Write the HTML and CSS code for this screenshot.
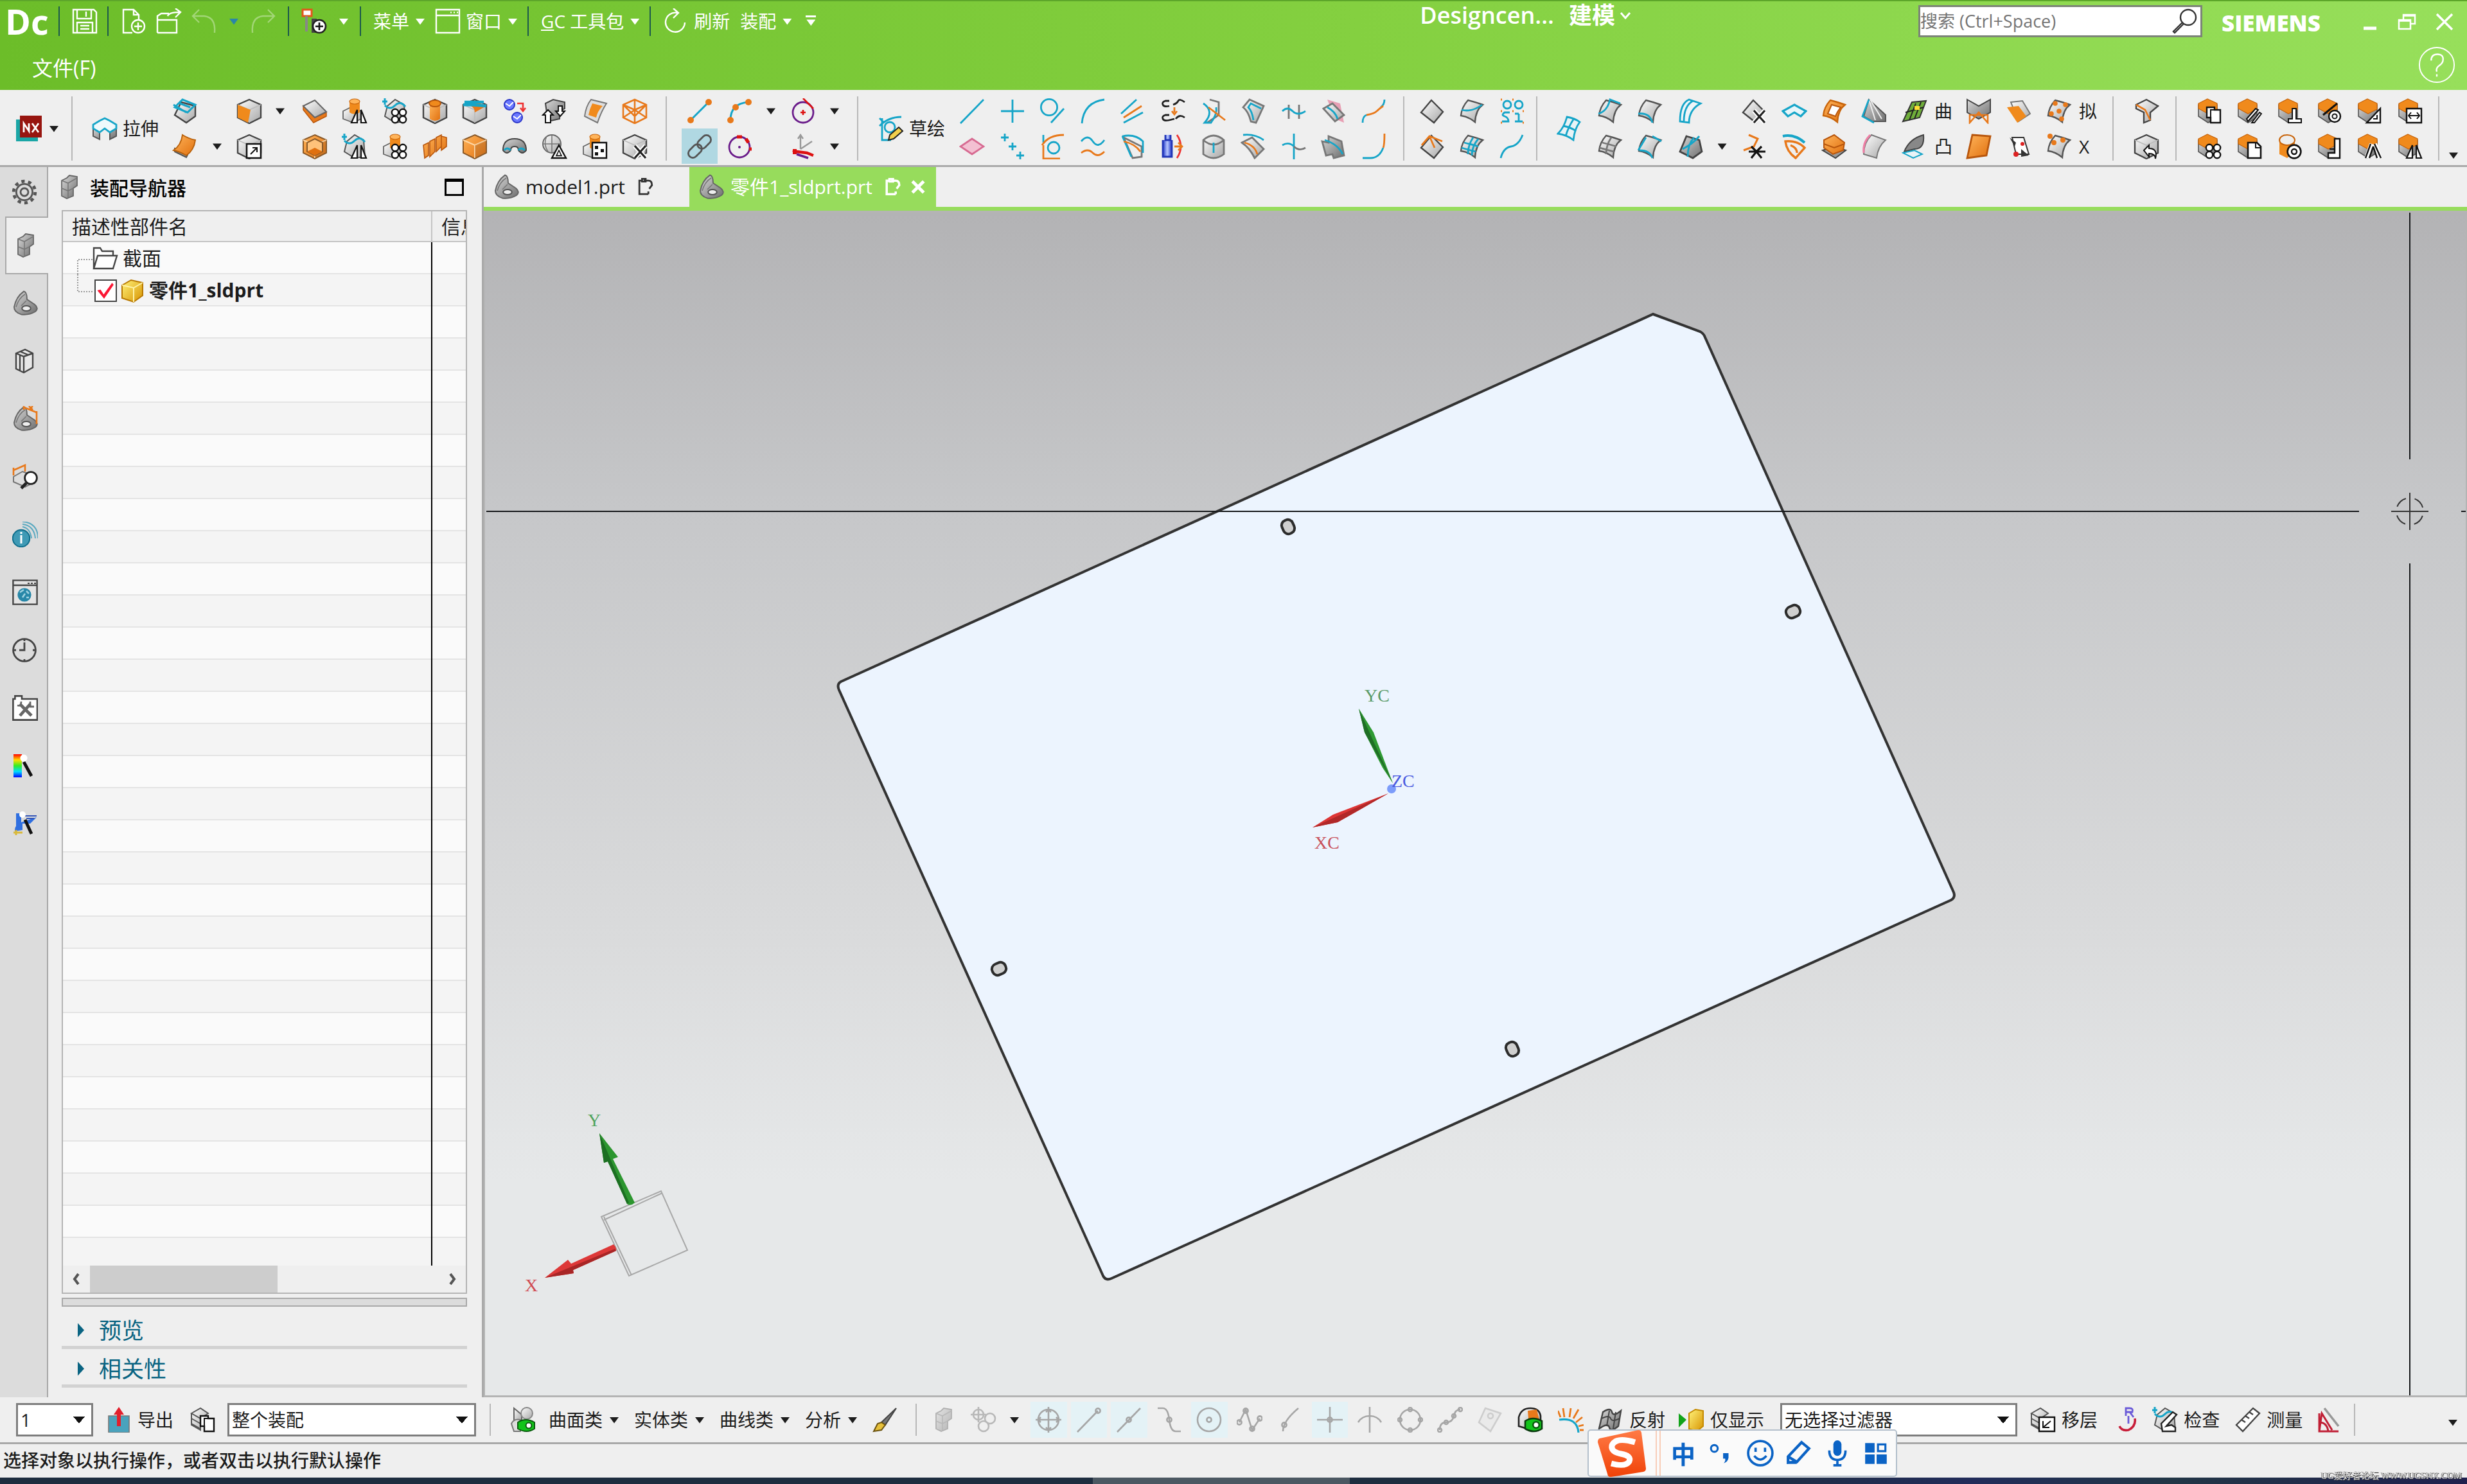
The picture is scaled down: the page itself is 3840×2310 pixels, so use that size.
FILE: index.html
```html
<!DOCTYPE html>
<html lang="zh-CN">
<head>
<meta charset="utf-8">
<title>Designcenter - 建模</title>
<link rel="stylesheet" href="styles.css">
</head>
<body>
<svg class="defs" width="0" height="0" aria-hidden="true">
<defs>
<linearGradient id="gG" x1="0" y1="0" x2="1" y2="1"><stop offset="0" stop-color="#fff"/><stop offset="1" stop-color="#a6a6a6"/></linearGradient>
<linearGradient id="gD" x1="0" y1="0" x2="1" y2="1"><stop offset="0" stop-color="#d8d8d8"/><stop offset="1" stop-color="#6e6e6e"/></linearGradient>
<linearGradient id="gO" x1="0" y1="0" x2="1" y2="1"><stop offset="0" stop-color="#ffb45a"/><stop offset="1" stop-color="#e0700f"/></linearGradient>
<linearGradient id="gY" x1="0" y1="0" x2="1" y2="1"><stop offset="0" stop-color="#fff27a"/><stop offset="1" stop-color="#d79300"/></linearGradient>
<linearGradient id="gB" x1="0" y1="0" x2="1" y2="0"><stop offset="0" stop-color="#1f35c8"/><stop offset=".5" stop-color="#b9c8ff"/><stop offset="1" stop-color="#1f35c8"/></linearGradient>
<linearGradient id="gR" x1="0" y1="0" x2="0" y2="1"><stop offset="0" stop-color="#f00"/><stop offset=".25" stop-color="#fd0"/><stop offset=".5" stop-color="#3e2"/><stop offset=".75" stop-color="#0df"/><stop offset="1" stop-color="#00f"/></linearGradient>
<linearGradient id="gS" x1="0" y1="0" x2="0" y2="1"><stop offset="0" stop-color="#ff7a45"/><stop offset="1" stop-color="#f04208"/></linearGradient>
</defs>
<!-- base bodies -->
<symbol id="cube" viewBox="0 0 20 20"><path d="M10 1l9 4v10l-9 4.500-9-4.500V5z" fill="url(#gG)" stroke="#444" stroke-width="1.200"/><path d="M1 5l9 4 9-4M10 9v10" fill="none" stroke="#bbb" stroke-width=".8"/></symbol>
<symbol id="cubeo" viewBox="0 0 20 20"><path d="M10 1l9 4v10l-9 4.500-9-4.500V5z" fill="url(#gO)" stroke="#8a5a2a" stroke-width="1"/><path d="M1 5l9 4 9-4M10 9v10" fill="none" stroke="#ffd9a8" stroke-width="1"/><path d="M10 9v10.500l9-4.500V5z" fill="#8a5a2a" opacity=".25"/></symbol>
<symbol id="cubet" viewBox="0 0 20 20"><path d="M1.500 5v9l7.500 5 7-4V5z" fill="url(#gD)" stroke="#555" stroke-width=".8"/><path d="M8.500.5L16 4v4.500L9 12 1.500 8V4z" fill="#f08a1c" stroke="#c8640a" stroke-width=".6"/></symbol>
<symbol id="dia" viewBox="0 0 20 20"><path d="M9.500 1.500l9 9-7 8.500-10-8z" fill="url(#gG)" stroke="#444" stroke-width="1.200"/></symbol>
<symbol id="sheet" viewBox="0 0 20 20"><path d="M7 1.500Q13 3 18.500 5 13 9 12.500 18.500 7 14 1.500 13.500 2 7 7 1.500z" fill="url(#gG)" stroke="#555" stroke-width="1.200"/></symbol>
<symbol id="sheeto" viewBox="0 0 20 20"><path d="M7 1.500Q13 3 18.500 5 13 9 12.500 18.500 7 14 1.500 13.500 2 7 7 1.500z" fill="url(#gO)" stroke="#c8640a" stroke-width="1.200"/></symbol>
<symbol id="cylo" viewBox="0 0 20 20"><path d="M1 10l6-3 8 3v6l-6 3-8-3z" fill="url(#gG)" stroke="#666" stroke-width=".9"/><path d="M6 2v9q4 2.500 8 0V2z" fill="#f08a1c"/><ellipse cx="10" cy="2.500" rx="4" ry="2" fill="#ffb45a" stroke="#c8640a" stroke-width=".6"/></symbol>
<symbol id="lego" viewBox="0 0 20 20"><path d="M4 5l4-2 2-2 6 1v7l-3 2v6l-5 2-4-2z" fill="url(#gD)" stroke="#666" stroke-width=".9"/><path d="M4 5l5 2 7-4M9 7v11M4 11l5 2 4-2" fill="none" stroke="#777" stroke-width=".8"/></symbol>
<symbol id="part" viewBox="0 0 20 20"><path d="M9 .8q2.500.5 2.500 6.200l6 4q3.500 3 .5 5.500-5 3-11 2.200-5.500-1.700-5.500-5.700Q3 5 9 .8z" fill="url(#gD)" stroke="#666" stroke-width="1"/><ellipse cx="11" cy="14" rx="3.400" ry="2" fill="#eee" stroke="#555"/><path d="M3 13Q5 6 10 3M11 8l-4 4" stroke="#777" fill="none" stroke-width=".8"/></symbol>
<!-- overlays -->
<symbol id="o-mir" viewBox="0 0 20 20"><path d="M12 9v10H7.500zM15 9v10h4z" fill="#fff" stroke="#111" stroke-width="1.100"/></symbol>
<symbol id="o-pat" viewBox="0 0 20 20"><g fill="#fff" stroke="#111" stroke-width="1.200"><circle cx="10" cy="11" r="2.600"/><circle cx="16" cy="11" r="2.600"/><circle cx="10" cy="16.500" r="2.600"/><circle cx="16" cy="16.500" r="2.600"/></g></symbol>
<symbol id="o-box" viewBox="0 0 20 20"><path d="M8 8h11v11H8z" fill="#fff" stroke="#111" stroke-width="1.300"/><path d="M11 16l5-5m-3.500 0H16v3.500" fill="none" stroke="#111"/></symbol>
<symbol id="o-x" viewBox="0 0 20 20"><path d="M10 9.500l8.500 9.500M18.500 9.500L10 19" stroke="#fff" stroke-width="3.600"/><path d="M10 9.500l8.500 9.500M18.500 9.500L10 19" stroke="#222" stroke-width="1.600"/></symbol>
<symbol id="o-tri" viewBox="0 0 20 20"><path d="M13.500 9l5.500 10H8z" fill="#fff" stroke="#111" stroke-width="1.200"/><path d="M13.500 13l2 4.200h-4z" fill="none" stroke="#111" stroke-width=".8"/></symbol>
<symbol id="o-page" viewBox="0 0 20 20"><path d="M8 7h6v2h4.500v10H11V15H8z" fill="#fff" stroke="#111" stroke-width="1.200"/><path d="M14 9h-3v6" fill="none" stroke="#111" stroke-width="1"/></symbol>
<symbol id="crv" viewBox="0 0 20 20"><path d="M4 6l6-5 7 4 1 13-8 1L2 14z" fill="url(#gG)" stroke="#555" stroke-width="1"/><path d="M2 0v5M0 2.500h4M2 5.500q4 4 8 0t8 1" fill="none" stroke="#16a5c8" stroke-width="1.500"/></symbol>
</svg>

<div class="app">
<header class="titlebar">
  <div class="quick">
    <span class="logo">Dc</span><i class="vs"></i>
    <button class="tb" aria-label="保存"><svg class="ico" viewBox="0 0 20 20"><path d="M1 1h16l2 2v16H1zM4 1v7h11V1M11 2.500v4M4 19v-8h12v8M6.500 13.500h7M6.500 16h7" class="w"/></svg></button><i class="vs"></i>
    <button class="tb" aria-label="新建"><svg class="ico" viewBox="0 0 20 20"><path d="M9 19H2V1h8l4 4v4M10 1v4h4" class="w"/><circle cx="13.500" cy="14" r="5" class="w"/><path d="M13.500 11v6M10.500 14h6" class="w"/></svg></button>
    <button class="tb" aria-label="打开"><svg class="ico" viewBox="0 0 20 20"><path d="M1 19V6l3-2h6M1 9h15v10H1M9 6q1-3 9-3M15 0l4 3-4 4" class="w"/></svg></button>
    <button class="tb dim" aria-label="撤销"><svg class="ico" viewBox="0 0 20 20"><path d="M6 1L1 6l5 5M1 6h9q9 1 8 13" class="w"/></svg></button>
    <button class="car blue" aria-label="撤销列表"></button>
    <button class="tb dim" aria-label="重做"><svg class="ico" viewBox="0 0 20 20"><path d="M14 1l5 5-5 5M19 6h-9q-9 1-8 13" class="w"/></svg></button><i class="vs"></i>
    <button class="tb" aria-label="触控模式"><svg class="ico" viewBox="0 0 20 20"><path d="M1 1h7v5H1z" fill="#fff" stroke="#e2571c" stroke-width="1.500"/><path d="M4 6v12" stroke="#888" stroke-width="2"/><path d="M8 8h4v11H8z" fill="#444"/><circle cx="14" cy="14" r="5" fill="#fff" stroke="#222" stroke-width="1.300"/><path d="M14 11v6M11 14h6" stroke="#111" stroke-width="1.300"/></svg></button>
    <button class="car lt" aria-label="更多模式"></button><i class="vs"></i>
    <button class="tx">菜单<b class="car lt"></b></button>
    <button class="tx"><svg class="ico" viewBox="0 0 20 20"><path d="M1 1h18v18H1zM1 5.500h18M12 3.200h1M14.500 3.200h1M17 3.200h1" class="w"/></svg>窗口<b class="car lt"></b></button><i class="vs"></i>
    <button class="tx"><span><u>G</u>C 工具包</span><b class="car lt"></b></button><i class="vs"></i>
    <button class="tx"><svg class="ico" viewBox="0 0 20 20"><path d="M17 11a7.500 7.500 0 1 1-6-7.500M8 0l4 3.500L8 7.500" class="w"/></svg>刷新</button>
    <button class="tx">装配<b class="car lt"></b></button>
    <button class="more" aria-label="工具条选项"><i></i><b class="car lt"></b></button>
  </div>
  <h1 class="title">Designcen... <button class="mode">建模<svg viewBox="0 0 20 20"><path d="M3 6l7 8 7-8" fill="none" stroke="#fff" stroke-width="3"/></svg></button></h1>
  <div class="right">
    <label class="search"><input type="search" placeholder="搜索 (Ctrl+Space)" aria-label="搜索"><svg class="ico" viewBox="0 0 20 20"><circle cx="12.500" cy="7" r="6" fill="none" stroke="#333" stroke-width="1.200"/><path d="M8 11l-7 7 1 1 7-7" fill="none" stroke="#333" stroke-width="1.200"/></svg></label>
    <span class="siemens">SIEMENS</span>
    <button class="win" aria-label="最小化"><svg viewBox="0 0 30 30"><path d="M5 24h20" stroke="#fff" stroke-width="5"/></svg></button>
    <button class="win" aria-label="还原"><svg viewBox="0 0 30 30"><path d="M9 10V3h18v14h-6M9 4.500h18M2 11h18v14H2zM2 12.500h18" fill="none" stroke="#fff" stroke-width="2.500"/></svg></button>
    <button class="win" aria-label="关闭"><svg viewBox="0 0 30 30"><path d="M3 2l24 24M27 2L3 26" stroke="#fff" stroke-width="3.500"/></svg></button>
  </div>
</header>
<nav class="menubar">
  <button class="file">文件(F)</button>
  <button class="help" aria-label="帮助"><svg viewBox="0 0 60 60"><circle cx="30" cy="30" r="28" fill="none" stroke="#fff" stroke-width="2"/><path d="M21 23q0-10 10-10t9 9q0 5-6 9t-4 10M30 45v4" fill="none" stroke="#fff" stroke-width="2.500"/></svg></button>
</nav>

<section class="ribbon" aria-label="功能区">
  <div class="grp nx"><button class="ic" aria-label="NX"><svg class="ico" viewBox="0 0 20 20"><path d="M0 3h17v17H0z" fill="#1aa6a6"/><path d="M3 0h17v17H3z" fill="#97150f"/><path d="M6 13V6l4 6V6M12.500 6l5 7M17.500 6l-5 7" stroke="#fff" stroke-width="1.400" fill="none"/></svg></button><button class="car" aria-label="应用模块"></button></div>
  <div class="grp ga">
    <button class="big"><svg class="ico" viewBox="0 0 20 20"><path d="M1 9v7l5 2.500V12l4-2 4 2v6.500l5-2.500V9z" fill="url(#gD)" stroke="#555"/><path d="M10 2l4 2 5 3v3l-5 3-4-3-4 3-5-3V7l5-3z" fill="#eef9fc" stroke="#16a5c8" stroke-width="1.400"/></svg>拉伸</button>
    <div class="grid g-a1">
      <button class="ic" aria-label="草图块"><svg class="ico" viewBox="0 0 20 20"><path d="M7 3l11 3v8l-7 5-9-6z" fill="url(#gG)" stroke="#444" stroke-width="1.200"/><path d="M8 1l10 4-6 6L2 7zM6 4l8 3M1 5l10 6" fill="none" stroke="#16a5c8" stroke-width="1.500"/></svg></button><span></span>
      <button class="ic" aria-label="基准块"><svg class="ico" viewBox="0 0 20 20"><use href="#cube"/><path d="M1 5l10 4-2 10-8-4z" fill="#f08a1c"/></svg></button><button class="car" aria-label="更多"></button>
      <button class="ic" aria-label="片体"><svg class="ico" viewBox="0 0 20 20"><path d="M2 14l9 4.500 1-2-10-5z" fill="#999" stroke="#555"/><path d="M8 1q5 3 10 4-1 8-7 12-5-3-10-4 6-4 7-12z" fill="url(#gO)" stroke="#b8610c"/></svg></button><button class="car" aria-label="更多"></button>
      <button class="ic" aria-label="缩放体"><svg class="ico" viewBox="0 0 20 20"><use href="#cube"/><use href="#o-box"/></svg></button><span></span>
    </div>
    <div class="grid c9">
      <button class="ic" aria-label="偏置面"><svg class="ico" viewBox="0 0 20 20"><path d="M1 6v3l8 10 10-5v-3l-9 4z" fill="#e8791b" stroke="#b8560c" stroke-width=".7"/><path d="M1 6l9-4.500 9 9L10 15z" fill="url(#gG)" stroke="#666"/></svg></button>
      <button class="ic" aria-label="镜像特征"><svg class="ico" viewBox="0 0 20 20"><use href="#cylo"/><use href="#o-mir"/></svg></button>
      <button class="ic" aria-label="阵列几何"><svg class="ico" viewBox="0 0 20 20"><use href="#crv"/><use href="#o-pat"/></svg></button>
      <button class="ic" aria-label="凸台"><svg class="ico" viewBox="0 0 20 20"><use href="#cube"/><path d="M6 4v12q4 3 8 0V4z" fill="url(#gO)"/><ellipse cx="10" cy="4" rx="4.500" ry="2.500" fill="#f08a1c" stroke="#b8560c"/></svg></button>
      <button class="ic" aria-label="修剪体"><svg class="ico" viewBox="0 0 20 20"><use href="#cube"/><path d="M1 5q9 0 9 6l9-5-9-4z" fill="#e8791b"/><path d="M1 5q9 0 18 1M2 3h15" stroke="#16a5c8" stroke-width="2.200" fill="none"/></svg></button>
      <button class="ic" aria-label="替换特征"><svg class="ico" viewBox="0 0 20 20"><circle cx="6" cy="5" r="4" fill="#6a78ff" stroke="#2a35c8"/><path d="M3 4l3 2 3-3" stroke="#fff" fill="none"/><circle cx="12" cy="15" r="4" fill="#6a78ff" stroke="#2a35c8"/><path d="M9 14l3 2 3-3" stroke="#fff" fill="none"/><path d="M12 4h4.500v5M14.500 7.500l2 2.500 2-2.500" stroke="#e33" fill="none" stroke-width="1.300"/></svg></button>
      <button class="ic" aria-label="移动面"><svg class="ico" viewBox="0 0 20 20"><path d="M3 4l6-3 9 2v5l-4 2v6l-9 2z" fill="url(#gD)" stroke="#444"/><path d="M1 13l4-4 4 4H7v6H3v-6zM13 6h3v4h2l-3.500 4L11 10h2z" fill="#fff" stroke="#111"/></svg></button>
      <button class="ic" aria-label="加厚"><svg class="ico" viewBox="0 0 20 20"><path d="M7 1l12 3q-4 6-7 15L2 14q1-8 5-13z" fill="#ddd" stroke="#777"/><path d="M8 4l8 2q-4 4-5 9l-6-2q1-5 3-9z" fill="#f08a1c"/></svg></button>
      <button class="ic" aria-label="线框"><svg class="ico" viewBox="0 0 20 20"><path d="M10 1l9 4v10l-9 4.500-9-4.500V5zM1 5l9 4 9-4M10 1v18M1 15l9-6 9 6M1 5l9 9 9-9" fill="none" stroke="#e8791b" stroke-width="1.300"/></svg></button>
      <button class="ic" aria-label="抽壳"><svg class="ico" viewBox="0 0 20 20"><use href="#cubeo"/><path d="M10 4l6 3v7l-6 3-6-3V7z" fill="#ffc27a" stroke="#8a5a2a"/><path d="M4 14l6-3 6 3-6 3z" fill="#e0700f"/></svg></button>
      <button class="ic" aria-label="镜像几何体"><svg class="ico" viewBox="0 0 20 20"><use href="#crv"/><use href="#o-mir"/></svg></button>
      <button class="ic" aria-label="阵列特征"><svg class="ico" viewBox="0 0 20 20"><use href="#cylo"/><use href="#o-pat"/></svg></button>
      <button class="ic" aria-label="筋板"><svg class="ico" viewBox="0 0 20 20"><path d="M1 9l4-2v10l-3 2zM6 6l4-2v10l-4 4zM11 3l4-2v9l-4 4zM15 2l4 1v7l-4 3z" fill="url(#gO)" stroke="#b8560c" stroke-width=".8"/></svg></button>
      <button class="ic" aria-label="块"><svg class="ico" viewBox="0 0 20 20"><use href="#cubeo"/></svg></button>
      <button class="ic" aria-label="桥接"><svg class="ico" viewBox="0 0 20 20"><path d="M1 13q0-9 9-9t9 9q-3 4-6 0 0-3-3-3t-3 3q-3 4-6 0z" fill="url(#gD)" stroke="#444"/><path d="M2 13q2-3 5 0M13 13q2-3 5 0" stroke="#16a5c8" stroke-width="1.500" fill="none"/></svg></button>
      <button class="ic" aria-label="拔模检查"><svg class="ico" viewBox="0 0 20 20"><circle cx="8" cy="8" r="7" fill="url(#gG)" stroke="#666"/><path d="M1 8h14M8 1v14M4 2q-3 6 1 12" fill="none" stroke="#777" stroke-width=".8"/><use href="#o-tri"/></svg></button>
      <button class="ic" aria-label="特征分组"><svg class="ico" viewBox="0 0 20 20"><use href="#cylo"/><path d="M8 7h11v12H8z" fill="#fff" stroke="#111" stroke-width="1.200"/><path d="M10 9.500h2.500V12H10zM10 14.500h2.500V17H10zM14.500 12H17v2.500h-2.500z" fill="#111"/></svg></button>
      <button class="ic" aria-label="删除面"><svg class="ico" viewBox="0 0 20 20"><use href="#cube"/><use href="#o-x"/></svg></button>
    </div>
  </div>
  <div class="grp gb">
    <div class="grid g-b">
      <button class="ic" aria-label="直线"><svg class="ico" viewBox="0 0 20 20"><path d="M3 17L17 3" stroke="#16a5c8" stroke-width="1.500"/><circle cx="3" cy="17" r="2.500" fill="#e8791b"/><circle cx="17" cy="3" r="2.500" fill="#e8791b"/></svg></button>
      <button class="ic" aria-label="圆弧"><svg class="ico" viewBox="0 0 20 20"><path d="M3 17Q3 4 17 3" stroke="#16a5c8" stroke-width="1.500" fill="none"/><circle cx="3" cy="17" r="2.500" fill="#e8791b"/><circle cx="7" cy="7" r="2.500" fill="#e8791b"/><circle cx="17" cy="3" r="2.500" fill="#e8791b"/></svg></button>
      <button class="car" aria-label="更多"></button>
      <button class="ic" aria-label="圆"><svg class="ico" viewBox="0 0 20 20"><circle cx="10" cy="11" r="8" fill="none" stroke="#6a1b8a" stroke-width="1.400"/><path d="M10 0l8 8M10 9v4M8 11h4" stroke="#d11" stroke-width="1.300"/></svg></button>
      <button class="car" aria-label="更多"></button>
      <button class="ic on" aria-label="关联"><svg class="ico" viewBox="0 0 20 20"><g transform="rotate(-45 10 10)" fill="none" stroke="#555" stroke-width="1.400"><rect x="-1" y="6.500" width="12" height="7" rx="3.500"/><rect x="9" y="6.500" width="12" height="7" rx="3.500"/></g></svg></button>
      <button class="ic" aria-label="三点圆"><svg class="ico" viewBox="0 0 20 20"><circle cx="10" cy="10.500" r="8" fill="none" stroke="#6a1b8a" stroke-width="1.400"/><path d="M8 2.500h4M15 4l2 3M17.500 12h2" stroke="#d11" stroke-width="2.600"/><circle cx="10" cy="10.500" r="1" fill="#6a1b8a"/></svg></button><span></span>
      <button class="ic" aria-label="坐标系"><svg class="ico" viewBox="0 0 20 20"><path d="M8 12V2M6 4l2-3 2 3M8 12l9-6" stroke="#999" fill="none" stroke-width="1.200"/><path d="M2 13l3 1 8 1 5 2" stroke="#d11" stroke-width="2.200" fill="none"/><path d="M5 16l9 3" stroke="#6a1b8a" stroke-width="1.800"/><path d="M2 12h3v4H2z" fill="#d11"/></svg></button>
      <button class="car" aria-label="更多"></button>
    </div>
  </div>
  <div class="grp gc">
    <button class="big"><svg class="ico" viewBox="0 0 20 20"><path d="M3 2v17h7M1 8Q8 1 18 1M1 2l3 3" stroke="#16a5c8" stroke-width="1.400" fill="none"/><circle cx="9" cy="9" r="4" fill="none" stroke="#16a5c8" stroke-width="1.400"/><path d="M8 19l1-4 7-6 3 3-7 6z" fill="#f3cf4b" stroke="#222"/></svg>草绘</button>
    <div class="grid c11 ln">
      <button class="ic" aria-label="直线"><svg class="ico" viewBox="0 0 20 20"><path d="M1 19.500L19 1"/></svg></button>
      <button class="ic" aria-label="点"><svg class="ico" viewBox="0 0 20 20"><path d="M10 1v18M1 10h18"/></svg></button>
      <button class="ic" aria-label="相切"><svg class="ico" viewBox="0 0 20 20"><circle cx="7.500" cy="7" r="6.300"/><path d="M9 19L19 8"/></svg></button>
      <button class="ic" aria-label="圆弧"><svg class="ico" viewBox="0 0 20 20"><path d="M1.500 19.500Q3 3 19 1"/></svg></button>
      <button class="ic" aria-label="偏置曲线"><svg class="ico" viewBox="0 0 20 20"><path d="M1 12L13 1M3 19l15-8"/><path d="M3 15L17 6" class="or"/></svg></button>
      <button class="ic" aria-label="转换"><svg class="ico" viewBox="0 0 20 20"><path d="M7 2H4Q1 3 2 5t5 1M10 5q3-1 4-3t5 1M7 13H4q-3 1-2 3t5 1 4-1M12 16q3-4 7-1" class="bk"/><path d="M11 7v4M9 10l2 2.500 2-2.500" class="or"/></svg></button>
      <button class="ic" aria-label="相交曲线"><svg class="ico" viewBox="0 0 20 20"><path d="M7 1l7 2v10l-9 6" class="gy"/><path d="M2 4q9 6 1 15h5Q13 12 12 7"/><path d="M6 7l13 10" class="or"/></svg></button>
      <button class="ic" aria-label="抽取曲线"><svg class="ico" viewBox="0 0 20 20"><path d="M7 1l11 5-6 13-4-1Q6 10 2 7z" fill="url(#gG)" class="gy"/><path d="M10 17Q9 10 6 7l2-3 8 4"/></svg></button>
      <button class="ic" aria-label="连结曲线"><svg class="ico" viewBox="0 0 20 20"><path d="M6 5v11M14 5v11" class="gy"/><path d="M1 10q4-4 8 0t10 0"/></svg></button>
      <button class="ic" aria-label="投影曲线"><svg class="ico" viewBox="0 0 20 20"><path d="M5 1l10 3 3 15-7-3z" fill="#e8a0b4" stroke="none"/><path d="M2 8l7-4 9 9-7 5z" fill="url(#gG)" class="gy"/><path d="M5 7q6 3 8 9"/></svg></button>
      <button class="ic" aria-label="桥接曲线"><svg class="ico" viewBox="0 0 20 20"><path d="M1 19q0-5 3-6M18 1q0 4-3 6"/><path d="M4 13q6-1 8-3 2-2 5-4" class="or"/></svg></button>
      <button class="ic" aria-label="平面"><svg class="ico" viewBox="0 0 20 20"><path d="M10 4l9 6-9 6-9-6z" fill="#f3c0d2" stroke="#d76a91"/></svg></button>
      <button class="ic" aria-label="点集"><svg class="ico" viewBox="0 0 20 20"><path d="M4 0v6M1 3h6M10 7v6M7 10h6M16 14v6M13 17h6"/></svg></button>
      <button class="ic" aria-label="轮廓"><svg class="ico" viewBox="0 0 20 20"><circle cx="11" cy="11" r="4.500"/><path d="M3 1v6"/><path d="M3 9v10.500h13M2 9Q7 1 19 1" class="or"/></svg></button>
      <button class="ic" aria-label="样条"><svg class="ico" viewBox="0 0 20 20"><path d="M1 6q5-6 9 0t9-1"/><path d="M1 15q5-4 9 0t9-1" class="or"/></svg></button>
      <button class="ic" aria-label="等参数曲线"><svg class="ico" viewBox="0 0 20 20"><path d="M3 3l14 7v8l-7 1z" class="gy"/><path d="M2 2Q12 0 18 6v9M2 2l7 16"/><path d="M3 6q9 2 13 8" class="or"/></svg></button>
      <button class="ic" aria-label="缠绕曲线"><svg class="ico" viewBox="0 0 20 20"><path d="M2 5v13h7V5M4 1v4h4V1" fill="url(#gB)" stroke="#2236b8"/><path d="M13 1q6 9 0 18" stroke="#e33"/><path d="M11 10h5M14 7l3 3-3 3" class="or"/></svg></button>
      <button class="ic" aria-label="圆柱截面"><svg class="ico" viewBox="0 0 20 20"><path d="M2 5v11q8 6 16 0V5Q10-2 2 5zM2 5q8 7 16 0" fill="url(#gG)" class="gy"/><path d="M10 7v8"/></svg></button>
      <button class="ic" aria-label="面上偏置"><svg class="ico" viewBox="0 0 20 20"><path d="M1 7l8-4 9 9-7 7Q7 11 1 7z" fill="url(#gG)" class="gy"/><path d="M2 1q9-1 16 4"/><path d="M3 7q8 2 10 9" class="or"/></svg></button>
      <button class="ic" aria-label="修剪曲线"><svg class="ico" viewBox="0 0 20 20"><path d="M10 0v20M1 9q5-3 9 1"/><path d="M10 10q4 4 9 1" class="gy"/></svg></button>
      <button class="ic" aria-label="组合投影"><svg class="ico" viewBox="0 0 20 20"><path d="M6 2l10 4 2 11-8 2-1-3-5 1L1 6l5 1z" fill="url(#gD)" class="gy"/><path d="M3 5q10 3 14 11"/></svg></button>
      <button class="ic" aria-label="圆角曲线"><svg class="ico" viewBox="0 0 20 20"><path d="M1 19h6q7 0 10-8"/><path d="M17 11q1-2 1-11" class="or"/></svg></button>
    </div>
  </div>
  <div class="grp gd">
    <div class="grid c3 ln">
      <button class="ic" aria-label="四点曲面"><svg class="ico" viewBox="0 0 20 20"><use href="#dia"/></svg></button>
      <button class="ic" aria-label="曲线网格"><svg class="ico" viewBox="0 0 20 20"><use href="#sheet"/><path d="M2 9q8 2 16-4"/></svg></button>
      <button class="ic" aria-label="约束"><svg class="ico" viewBox="0 0 20 20"><circle cx="6" cy="5" r="3"/><circle cx="15" cy="5" r="3"/><path d="M8 11H4q-3 2 0 3t3 4H2M12 18h6M15 12v6M12 12h3"/><path d="M1 1h1M10 1h1M18 10h1M1 10h1M10 10h1M18 19h1M1 19h1" class="or"/></svg></button>
      <button class="ic" aria-label="有界平面"><svg class="ico" viewBox="0 0 20 20"><use href="#dia"/><path d="M2 9l6-7 10 4M8 2l4 9" class="or"/></svg></button>
      <button class="ic" aria-label="通过曲线网格"><svg class="ico" viewBox="0 0 20 20"><use href="#sheet"/><path d="M4 7q8 2 11 3M11 3Q7 9 7 16M15 4q-5 6-5 13M2 11q7 2 11 3"/></svg></button>
      <button class="ic" aria-label="曲线"><svg class="ico" viewBox="0 0 20 20"><path d="M1 19q2-8 8-9t9-9"/></svg></button>
    </div>
  </div>
  <div class="grp ge">
    <button class="ic mid" aria-label="NX 创建形状"><svg class="ico ln" viewBox="0 0 20 20"><path d="M8 1q6 1 10 4-4 5-5 14-5-4-12-5 5-5 7-13z" fill="#e8f3f6"/><path d="M5 8q6 1 10 4M13 3Q9 9 7 16"/></svg></button>
    <div class="grid g-e1 ln">
      <button class="ic" aria-label="直纹"><svg class="ico" viewBox="0 0 20 20"><use href="#sheet"/><path d="M1 12Q8 10 10 1l8 3M5 14"/></svg></button>
      <button class="ic" aria-label="扫掠"><svg class="ico" viewBox="0 0 20 20"><use href="#sheet"/><path d="M1 12q9-1 11 7"/></svg></button>
      <button class="ic" aria-label="管"><svg class="ico" viewBox="0 0 20 20"><path d="M2 18Q2 4 9 1l9 3Q9 9 9 19zM5 18Q5 6 12 2" fill="#eef6f9"/></svg></button><span></span>
      <button class="ic" aria-label="网格"><svg class="ico" viewBox="0 0 20 20"><use href="#sheet"/><path d="M4 7q8 2 11 3M11 3Q7 9 7 16M2 11q7 2 11 3" class="gy"/></svg></button>
      <button class="ic" aria-label="N边曲面"><svg class="ico" viewBox="0 0 20 20"><use href="#sheet"/><path d="M1 13l6-10M2 13q8 0 10 6M12 2l7 4"/></svg></button>
      <button class="ic" aria-label="变换曲面"><svg class="ico" viewBox="0 0 20 20"><path d="M7 2l10 3 2 9-7 5-10-5z" fill="url(#gD)" stroke="#444"/><path d="M4 12Q12 8 17 2M8 18Q8 8 13 3"/></svg></button><button class="car" aria-label="更多"></button>
    </div>
    <div class="grid c5">
      <button class="ic" aria-label="取消修剪"><svg class="ico" viewBox="0 0 20 20"><use href="#dia"/><use href="#o-x"/></svg></button>
      <button class="ic" aria-label="边界"><svg class="ico" viewBox="0 0 20 20"><path d="M10 5l9 5-4 4-5-3-5 3-4-4z" fill="#e8f6fa" stroke="#16a5c8" stroke-width="1.600"/></svg></button>
      <button class="ic" aria-label="修剪片体"><svg class="ico" viewBox="0 0 20 20"><use href="#sheeto"/><path d="M8 5l7 2q-3 4-4 7l-6-2z" fill="#fff" stroke="#b8560c"/></svg></button>
      <button class="ic" aria-label="规律延伸"><svg class="ico" viewBox="0 0 20 20"><path d="M6 1l13 12v5H9l-7-4z" fill="url(#gD)" stroke="#555"/><path d="M6 1l5 16M7 1l9 15" stroke="#eee" stroke-width="1" fill="none"/><path d="M6 1L1 14l9 5" stroke="#16a5c8" stroke-width="1.400" fill="none"/></svg></button>
      <button class="ic" aria-label="曲率"><svg class="ico" viewBox="0 0 20 20"><path d="M8 3l11-1-5 13-13 3z" fill="#6fae3a" stroke="#333"/><path d="M3 11l14-4M11 4L6 17M15 3l-5 13" stroke="#222"/><path d="M10 6h4v3h-4z" fill="#fd3"/></svg></button>
      <button class="ic" aria-label="缝合"><svg class="ico" viewBox="0 0 20 20"><path d="M6 1l7 3-3 6-8 3" fill="none" stroke="#e8791b" stroke-width="1.500"/><path d="M8 10l4 4 4-4M8 19l4-5 4 5M6 14h13" fill="none" stroke="#111" stroke-width="1.600"/></svg></button>
      <button class="ic" aria-label="延伸片体"><svg class="ico" viewBox="0 0 20 20"><path d="M3 6q9-1 15 5l-7 8Q4 14 3 6zM7 9q5 2 5 6" fill="none" stroke="#e8791b" stroke-width="1.700"/><path d="M1 2q9-2 17 5" fill="none" stroke="#16a5c8" stroke-width="2"/></svg></button>
      <button class="ic" aria-label="偏置曲面"><svg class="ico" viewBox="0 0 20 20"><path d="M1 13l9-3 9 3-8 6z" fill="#999" stroke="#444"/><path d="M2 5l8-4 8 6-1 6-8 3-7-5z" fill="url(#gO)" stroke="#b8560c"/><path d="M2 8l8 3 8-3" stroke="#b8560c" fill="none"/></svg></button>
      <button class="ic" aria-label="面倒圆"><svg class="ico" viewBox="0 0 20 20"><path d="M8 1l11 4q-6 5-7 14L2 16Q2 7 8 1z" fill="url(#gG)" stroke="#777"/><path d="M7 1Q1 7 2 15" stroke="#ee7fa5" stroke-width="1.500" fill="none"/></svg></button>
      <button class="ic" aria-label="凸面"><svg class="ico" viewBox="0 0 20 20"><path d="M17 1Q6 4 2 14l8-2q8 0 7-11z" fill="#888" stroke="#444"/><path d="M1 15l9-2 6 3-7 3z" fill="#e9f4f7" stroke="#16a5c8"/></svg></button>
    </div>
    <div class="grid lbl"><span>曲</span><span>凸</span></div>
    <div class="grid c3">
      <button class="ic" aria-label="匹配边"><svg class="ico" viewBox="0 0 20 20"><path d="M1 1l9 5 9-5v10l-9 5-9-5z" fill="url(#gD)" stroke="#444"/><path d="M3 19l7-8 7 8v-6H3z" fill="none" stroke="#e8791b" stroke-width="1.300"/></svg></button>
      <button class="ic" aria-label="扩大"><svg class="ico" viewBox="0 0 20 20"><path d="M4 3l9-1 6 10-9 6z" fill="url(#gG)" stroke="#777"/><path d="M1 7l9-1 6 8-7 5z" fill="#f08a1c"/></svg></button>
      <button class="ic" aria-label="I 型"><svg class="ico" viewBox="0 0 20 20"><use href="#sheet"/><g fill="#e8791b"><circle cx="7" cy="4" r="1.900"/><circle cx="15" cy="5" r="1.900"/><circle cx="10" cy="10" r="1.900"/><circle cx="4" cy="12" r="1.900"/><circle cx="12" cy="16" r="1.900"/></g></svg></button>
      <button class="ic" aria-label="整体突变"><svg class="ico" viewBox="0 0 20 20"><path d="M5 1l14 1-3 15-15 2z" fill="url(#gO)" stroke="#b8560c" stroke-width="1.400"/></svg></button>
      <button class="ic" aria-label="剪断曲面"><svg class="ico" viewBox="0 0 20 20"><path d="M5 3h9l4 13H8z" fill="#fff" stroke="#333"/><path d="M3 3l5 4-1 3zM12 12l6 5-6 1z" fill="#333"/><circle cx="8" cy="16" r="2" fill="#d22"/><circle cx="13" cy="8" r="1.500" fill="#d22"/></svg></button>
      <button class="ic" aria-label="X 型"><svg class="ico" viewBox="0 0 20 20"><use href="#sheet"/><g fill="#e8791b"><circle cx="3" cy="2" r="2"/><circle cx="13" cy="5" r="2"/><circle cx="6" cy="7" r="2"/></g></svg></button>
    </div>
    <div class="grid lbl"><span>拟</span><span>X</span></div>
  </div>
  <div class="grp gf">
    <div class="grid c1">
      <button class="ic" aria-label="分割面"><svg class="ico" viewBox="0 0 20 20"><path d="M2 5l8-4 9 5-6 5v6l-5 2v-8L2 8z" fill="url(#gG)" stroke="#444" stroke-width="1.200"/><path d="M2 5l7 4 4 8" stroke="#e8791b" fill="none" stroke-width="1.300"/></svg></button>
      <button class="ic" aria-label="重新执行"><svg class="ico" viewBox="0 0 20 20"><use href="#cube"/><path d="M8 13l4-4v2.500q7 0 5 8 0-4-5-4V18z" fill="#fff" stroke="#111"/></svg></button>
    </div>
  </div>
  <div class="grp gg">
    <div class="grid c6">
      <button class="ic" aria-label="设为共面"><svg class="ico" viewBox="0 0 20 20"><use href="#cubet"/><use href="#o-page"/></svg></button>
      <button class="ic" aria-label="设为平行"><svg class="ico" viewBox="0 0 20 20"><use href="#cubet"/><path d="M8 16l7-8 2 1-8 9zM12 19l6-8 1.500 1L14 19z" fill="#fff" stroke="#111"/></svg></button>
      <button class="ic" aria-label="设为垂直"><svg class="ico" viewBox="0 0 20 20"><use href="#cubet"/><path d="M12 8h3v8h4v3H9v-3h3z" fill="#fff" stroke="#111"/></svg></button>
      <button class="ic" aria-label="设为相切"><svg class="ico" viewBox="0 0 20 20"><use href="#cubet"/><circle cx="14" cy="14" r="4.500" fill="#fff" stroke="#111" stroke-width="1.200"/><circle cx="14" cy="14" r="1.800" fill="none" stroke="#111"/><path d="M5 13l11-9" stroke="#111" stroke-width="1.500"/></svg></button>
      <button class="ic" aria-label="角度尺寸"><svg class="ico" viewBox="0 0 20 20"><use href="#cubet"/><path d="M18.500 8v11H8z" fill="#fff" stroke="#111" stroke-width="1.200"/><path d="M13 16h3v-3" stroke="#111" fill="none"/></svg></button>
      <button class="ic" aria-label="线性尺寸"><svg class="ico" viewBox="0 0 20 20"><use href="#cubet"/><path d="M7.500 8H19v11H7.500z" fill="#fff" stroke="#111" stroke-width="1.200"/><path d="M11 11l-2 2.500 2 2.500M15.500 11l2 2.500-2 2.500M9 13.500h8" fill="none" stroke="#111"/></svg></button>
      <button class="ic" aria-label="阵列面"><svg class="ico" viewBox="0 0 20 20"><use href="#cubet"/><use href="#o-pat"/></svg></button>
      <button class="ic" aria-label="复制面"><svg class="ico" viewBox="0 0 20 20"><use href="#cubet"/><path d="M9 7h7l3 3v9H9z" fill="#fff" stroke="#111" stroke-width="1.300"/><path d="M15 7v4h4" fill="none" stroke="#111"/></svg></button>
      <button class="ic" aria-label="径向尺寸"><svg class="ico" viewBox="0 0 20 20"><path d="M2 4v12l6 3 6-5V4z" fill="#f08a1c"/><ellipse cx="8" cy="5" rx="6" ry="4" fill="#eee" stroke="#c8640a"/><circle cx="13.500" cy="14" r="5.200" fill="#fff" stroke="#111" stroke-width="1.300"/><circle cx="13.500" cy="14" r="2" fill="none" stroke="#111" stroke-width="1.200"/></svg></button>
      <button class="ic" aria-label="拉出面"><svg class="ico" viewBox="0 0 20 20"><use href="#cubet"/><path d="M14 4h4v15H9v-4h5z" fill="#fff" stroke="#111" stroke-width="1.200"/><path d="M10 12h4" stroke="#111"/></svg></button>
      <button class="ic" aria-label="设为对称"><svg class="ico" viewBox="0 0 20 20"><use href="#cubet"/><path d="M12 8L8 19M14 8l4 11" fill="none" stroke="#fff" stroke-width="4"/><path d="M11 8L7 19M13 10l-3 9M14 8l5 11M13 10l3 9" fill="none" stroke="#111" stroke-width="1.200"/></svg></button>
      <button class="ic" aria-label="镜像面"><svg class="ico" viewBox="0 0 20 20"><use href="#cubet"/><use href="#o-mir"/></svg></button>
    </div>
  </div>
  <button class="car end" aria-label="功能区选项"></button>
</section>

<main class="main">
  <nav class="rail" aria-label="资源条">
    <button aria-label="资源条选项"><svg class="ico" viewBox="0 0 20 20"><circle cx="10" cy="10" r="6.300" fill="none" stroke="#555" stroke-width="1.400"/><circle cx="10" cy="10" r="8.400" fill="none" stroke="#555" stroke-width="2.400" stroke-dasharray="2.600 2.680"/><circle cx="10" cy="10" r="3" fill="none" stroke="#555" stroke-width="1.400"/></svg></button>
    <button class="sel" aria-label="装配导航器"><svg class="ico" viewBox="0 0 20 20"><use href="#lego"/></svg></button>
    <button aria-label="部件导航器"><svg class="ico" viewBox="0 0 20 20"><use href="#part"/></svg></button>
    <button aria-label="重用库"><svg class="ico" viewBox="0 0 20 20"><path d="M3 4l7-3 6 3v11l-7 4-6-3zM3 4l6 2.500L16 4M9 6.500V19M6 5v12.500M6 2.500L12 5" fill="#e8e8e8" stroke="#444" stroke-width="1.200"/></svg></button>
    <button aria-label="MBD 导航器"><svg class="ico" viewBox="0 0 20 20"><use href="#part"/><path d="M9 0v3M9 1l10 4M13 0l3 3M16 0l-3 3M19 4v10" stroke="#e8791b" fill="none" stroke-width="1.300"/></svg></button>
    <button aria-label="查看"><svg class="ico" viewBox="0 0 20 20"><path d="M1 10l7-4 8 3v6l-6 3-9-4z" fill="#ddd" stroke="#777"/><path d="M1 3v6M1 5l9-4v5" stroke="#e8791b" fill="none" stroke-width="1.300"/><circle cx="14.500" cy="11" r="4.700" fill="#fff" stroke="#222" stroke-width="1.400"/><path d="M11 15l-4 4" stroke="#222" stroke-width="2.400"/></svg></button>
    <button aria-label="HD3D 工具"><svg class="ico" viewBox="0 0 20 20"><circle cx="7" cy="13" r="6.600" fill="#3f9ab5" stroke="#0e6e8c"/><path d="M7 10.500V17M7 8v1.500" stroke="#fff" stroke-width="1.500"/><path d="M8 4q6 1 7 9M8 2q9 1 10 11M8 0q12 1 12 13" stroke="#5aa9c0" fill="none" stroke-width="1"/></svg></button>
    <button aria-label="Web 浏览器"><svg class="ico" viewBox="0 0 20 20"><path d="M.7.7h18.600v18.600H.7zM.7 4.500h18.600" fill="#e4e4e4" stroke="#444" stroke-width="1.200"/><path d="M12 3h1.500M14.500 3H16M17 3h1.500" stroke="#444"/><circle cx="9.500" cy="12" r="5.300" fill="#2787a8"/><path d="M6 10l3-2M11 9l2 2M8 14l2-3M11 14h2" stroke="#9fd2e0" fill="none" stroke-width="1.300"/></svg></button>
    <button aria-label="历史记录"><svg class="ico" viewBox="0 0 20 20"><circle cx="9.500" cy="10" r="8.700" fill="none" stroke="#444" stroke-width="1.400"/><path d="M9.500 4v6H5.500M9.500 1v2M9.500 17v2M1 10h2M16 10h2" stroke="#444" stroke-width="1.400" fill="none"/></svg></button>
    <button aria-label="Process Studio"><svg class="ico" viewBox="0 0 20 20"><path d="M.7 3h1.500V.7H7.500V3h12v16.300H.7z" fill="#fff" stroke="#444" stroke-width="1.300"/><path d="M6 16l8-9M6 7l9 9" stroke="#666" stroke-width="2.400"/><path d="M4 8q3 1 3-3M14 5v4h3" stroke="#666" fill="none" stroke-width="1.400"/></svg></button>
    <button aria-label="加工向导"><svg class="ico" viewBox="0 0 20 20"><path d="M1 1h6.500v18H1z" fill="url(#gR)"/><path d="M9 7l6 11" stroke="#111" stroke-width="2.400"/><circle cx="9" cy="4" r="2.800" fill="#fff"/></svg></button>
    <button aria-label="角色"><svg class="ico" viewBox="0 0 20 20"><path d="M3 2h4v7l12-4-5 5H8v5l-6 1q0-3 1-4z" fill="#2f6fe0"/><path d="M10 4h9M11 6h6" stroke="#3557b8"/><path d="M1 17h7M3 15v4" stroke="#d9b93a" stroke-width="1.500"/><path d="M10 7l5 11" stroke="#111" stroke-width="2.400"/><circle cx="8" cy="3" r="2.500" fill="#fff"/></svg></button>
  </nav>

  <aside class="panel">
    <div class="phead"><svg class="ico" viewBox="0 0 20 20"><use href="#lego"/></svg><h2>装配导航器</h2><button class="max" aria-label="最大化"></button></div>
    <div class="tree">
      <table>
        <thead><tr><th class="c1">描述性部件名</th><th>信息</th></tr></thead>
        <tbody>
          <tr><td><div class="row"><svg class="twig" viewBox="0 0 24 50"><path d="M24 27H1V50"/></svg><svg class="ico" viewBox="0 0 20 20"><path d="M1 18V2h5l1.500 2.500H16V8M1 18L4 8h15l-3 10z" fill="#fff" stroke="#444" stroke-width="1.200"/></svg><span>截面</span></div></td><td></td></tr>
          <tr><td><div class="row"><svg class="twig" viewBox="0 0 24 50"><path d="M1 0V27H24"/></svg><input type="checkbox" id="p1" checked><label for="p1"><svg class="ico" viewBox="0 0 20 20"><path d="M2 6l7-4 9 2v10l-7 5-9-3z" fill="url(#gY)" stroke="#b87800"/><path d="M2 6l9 2 7-4M11 8v11" stroke="#fff3a8" fill="none"/></svg><b>零件1_sldprt</b></label></div></td><td></td></tr>
        </tbody>
      </table>
      <div class="hscroll"><button aria-label="向左滚动"><svg viewBox="0 0 20 20"><path d="M13 2L7 10l6 8" /></svg></button><i class="thumb"></i><button aria-label="向右滚动"><svg viewBox="0 0 20 20"><path d="M7 2l6 8-6 8"/></svg></button></div>
    </div>
    <div class="split"></div>
    <button class="fold"><i></i>预览</button>
    <button class="fold"><i></i>相关性</button>
  </aside>

  <section class="work">
    <div class="tabs" role="tablist">
      <button class="tab" role="tab"><svg class="ico" viewBox="0 0 20 20"><use href="#part"/></svg><span>model1.prt</span><svg class="doc" viewBox="0 0 20 20"><path d="M13 18H3V3h3M13 18v-3M8 3h5q4 0 4 5l-3 4M6 1h4v3H6z" fill="none" stroke="#333" stroke-width="2"/></svg></button>
      <button class="tab cur" role="tab" aria-selected="true"><svg class="ico" viewBox="0 0 20 20"><use href="#part"/></svg><span>零件1_sldprt.prt</span><svg class="doc" viewBox="0 0 20 20"><path d="M13 18H3V3h3M13 18v-3M8 3h5q4 0 4 5l-3 4M6 1h4v3H6z" fill="none" stroke="#fff" stroke-width="2.500"/></svg><svg class="cls" viewBox="0 0 20 20"><path d="M2 2l16 16M18 2L2 18" stroke="#fff" stroke-width="4.500"/></svg></button>
    </div>
    <div class="canvas">
      <svg viewBox="755 331 3083 1841" preserveAspectRatio="xMidYMid slice" role="img" aria-label="零件视图">
        <path d="M2573 489L2646 516Q2652 519 2654 525L3041 1389Q3044 1397 3037 1401L1730 1990Q1721 1994 1717 1986L1306 1074Q1302 1065 1309 1061Z" fill="#ecf4fe" stroke="#333" stroke-width="4"/>
        <g fill="#cfcfcf" stroke="#2c2c2c" stroke-width="4">
          <rect x="1996" y="809" width="18" height="22" rx="8" transform="rotate(-24 2005 820)"/>
          <rect x="2780" y="943" width="22" height="18" rx="8" transform="rotate(-24 2791 952)"/>
          <rect x="1544" y="1499" width="22" height="18" rx="8" transform="rotate(-24 1555 1508)"/>
          <rect x="2345" y="1622" width="18" height="22" rx="8" transform="rotate(-24 2354 1633)"/>
        </g>
        <path d="M2115 1103L2138 1140 2168 1219 2152 1195 2124 1140z" fill="#2f9a33"/>
        <path d="M2115 1103L2124 1140 2168 1219 2136 1150z" fill="#1f6e26"/>
        <path d="M2043 1288L2075 1268 2161 1235 2114 1262 2082 1280z" fill="#dd3535"/>
        <path d="M2043 1288L2082 1280 2161 1235 2114 1256z" fill="#b02828"/>
        <circle cx="2166" cy="1228" r="7" fill="#7c9cfa"/>
        <g class="axis"><text x="2124" y="1092" fill="#5a9a68">YC</text><text x="2166" y="1225" fill="#4a5ae0">ZC</text><text x="2046" y="1321" fill="#c8505a">XC</text>
        <text x="915" y="1753" fill="#4fa35c">Y</text><text x="817" y="2010" fill="#d04a52">X</text></g>
        <g fill="none" stroke="#a8a8a8" stroke-width="2"><path d="M936 1894L1029 1854 1070 1946 979 1986zM940 1899L1031 1857M940 1894L983 1985"/></g>
        <path d="M933 1764L962 1801 954 1804 988 1872Q982 1878 976 1874L946 1808 940 1810z" fill="#2c962f"/>
        <path d="M933 1764L940 1810 946 1808 976 1874 979 1872z" fill="#1c6f22"/>
        <path d="M848 1989L884 1961 889 1967 955 1937Q960 1942 959 1947L892 1977 893 1982z" fill="#dd3838"/>
        <path d="M848 1989L893 1982 892 1977 959 1947 957 1944z" fill="#a82626"/>
        <g stroke="#16181a" stroke-width="2" fill="none">
          <path d="M757 796H3672M3831 796H3838M3751 331V715M3751 877V2173"/>
          <path d="M3722 796H3780M3751 767V825" stroke="#333"/>
          <circle cx="3751" cy="796" r="21" stroke="#333" stroke-dasharray="19 14" stroke-dashoffset="-7"/>
        </g>
      </svg>
    </div>
  </section>
</main>

<section class="bottom" aria-label="选择条">
  <select class="s1" aria-label="图层"><option>1</option></select>
  <button class="bt e"><svg class="ico" viewBox="0 0 20 20"><path d="M2 7h16v13H2z" fill="#4aa3bd" stroke="#777" stroke-width=".8"/><path d="M10 0l4 6h-2.500v9h-3V6H6z" fill="#e2202c"/></svg>导出</button>
  <button class="bt l" aria-label="图层设置"><svg class="ico" viewBox="0 0 20 20"><path d="M1 5l7-4 6 4-6 4zM1 9l7 4M1 13l7 4M1 5v9l7 4V9" fill="url(#gG)" stroke="#555"/><use href="#o-page"/></svg></button>
  <select class="s2" aria-label="选择范围"><option>整个装配</option></select>
  <i class="bs"></i>
  <button class="bt k" aria-label="类型"><svg class="ico" viewBox="0 0 20 20"><path d="M3 1l6 5v5H3z" fill="url(#gG)" stroke="#666"/><circle cx="13" cy="5" r="4.500" fill="url(#gG)" stroke="#888"/><path d="M1 13q2-4 7-3v9H3z" fill="#ddd" stroke="#777"/><path d="M6 12q6-4 13 0v5q-6 4-13 0z" fill="#12c41a" stroke="#0a5a0e"/><circle cx="14.500" cy="14.500" r="2.200" fill="#fff" stroke="#0a5a0e"/></svg></button>
  <button class="bt m">曲面类<b class="car"></b></button>
  <button class="bt m">实体类<b class="car"></b></button>
  <button class="bt m">曲线类<b class="car"></b></button>
  <button class="bt m">分析<b class="car"></b></button>
  <button class="bt br" aria-label="编辑对象显示"><svg class="ico" viewBox="0 0 20 20"><path d="M7 12L18.500 1 10 14z" fill="#777" stroke="#444"/><path d="M1 19l3-6 3-1 3 2-3 4z" fill="#e6c03a" stroke="#6a5210"/></svg></button>
  <i class="bs"></i>
  <div class="grid snap0">
    <button class="ic off" aria-label="体"><svg class="ico" viewBox="0 0 20 20"><use href="#lego"/></svg></button>
    <button class="ic off" aria-label="捕捉"><svg class="ico" viewBox="0 0 20 20" fill="none" stroke="#777" stroke-width="1.300"><circle cx="6" cy="6" r="4"/><path d="M6 0v12M0 6h12"/><circle cx="15" cy="9" r="4"/><circle cx="10" cy="15" r="4"/></svg></button>
    <button class="car" aria-label="更多"></button>
  </div>
  <div class="grid snap">
    <button class="ic hl" aria-label="启用捕捉点"><svg class="ico" viewBox="0 0 20 20"><circle cx="10" cy="10" r="8"/><path d="M10 0v20M0 10h20M8 4l2-2 2 2M8 16l2 2 2-2M4 8l-2 2 2 2M16 8l2 2-2 2"/></svg></button>
    <button class="ic hl" aria-label="端点"><svg class="ico" viewBox="0 0 20 20"><path d="M1 19.500L17 3"/><circle cx="17" cy="3" r="1.800"/></svg></button>
    <button class="ic hl" aria-label="中点"><svg class="ico" viewBox="0 0 20 20"><path d="M1 19.500L19 1"/><circle cx="10" cy="10" r="1.800"/></svg></button>
    <button class="ic" aria-label="控制点"><svg class="ico" viewBox="0 0 20 20"><path d="M1 1h4q4 0 5 9t5 9h4"/><circle cx="10" cy="10" r="1.800"/></svg></button>
    <button class="ic hl" aria-label="圆弧中心"><svg class="ico" viewBox="0 0 20 20"><circle cx="10" cy="10" r="9"/><circle cx="10" cy="10" r="1.800"/></svg></button>
    <button class="ic" aria-label="极点"><svg class="ico" viewBox="0 0 20 20"><path d="M2 12L7 2l5 16 6-9"/><circle cx="7" cy="3" r="1.800"/><circle cx="2" cy="12" r="1.800"/><circle cx="12" cy="17" r="1.800"/><circle cx="18" cy="9" r="1.800"/></svg></button>
    <button class="ic" aria-label="定义点"><svg class="ico" viewBox="0 0 20 20"><path d="M5 19q0-8 12-18"/><circle cx="6" cy="14" r="1.800"/></svg></button>
    <button class="ic hl" aria-label="交点"><svg class="ico" viewBox="0 0 20 20"><path d="M10 0v20M0 10h20"/><circle cx="10" cy="10" r="1.800"/></svg></button>
    <button class="ic" aria-label="投影交点"><svg class="ico" viewBox="0 0 20 20"><path d="M10 0v20M1 12q3-5 9-5t9 5"/></svg></button>
    <button class="ic" aria-label="象限点"><svg class="ico" viewBox="0 0 20 20"><circle cx="10" cy="10" r="8"/><circle cx="10" cy="2" r="1.500"/><circle cx="10" cy="18" r="1.500"/><circle cx="2" cy="10" r="1.500"/><circle cx="18" cy="10" r="1.500"/></svg></button>
    <button class="ic" aria-label="现有点"><svg class="ico" viewBox="0 0 20 20"><path d="M2 18q0-6 5-6t6-5 5-5"/><circle cx="2" cy="18" r="1.500"/><circle cx="7" cy="12" r="1.500"/><circle cx="13" cy="7" r="1.500"/><circle cx="18" cy="2" r="1.500"/></svg></button>
    <button class="ic off" aria-label="面上的点"><svg class="ico" viewBox="0 0 20 20"><path d="M6 1l12 4-8 14-9-7z" fill="#e4e4e4"/><circle cx="10" cy="7" r="2"/></svg></button>
    <button class="ic" aria-label="渲染样式"><svg class="ico plain" viewBox="0 0 20 20"><path d="M1 8Q3 1 10 1t8 6v9l-7 2-10-3z" fill="url(#gG)" stroke="#222"/><path d="M8 3l7-1 2 8-8 4z" fill="#e8791b"/><path d="M6 11q6-4 13 0v6q-6 4-13 0z" fill="#12c41a" stroke="#0a3a0e"/><circle cx="14.500" cy="14" r="2.400" fill="#fff" stroke="#0a5a0e"/></svg></button>
    <button class="ic" aria-label="曲率梳"><svg class="ico plain" viewBox="0 0 20 20"><path d="M1 10q14-2 15 10" fill="none" stroke="#16a5c8" stroke-width="1.600"/><path d="M2 8L0 3M5 8L4 1M9 8l1-7M12 9l4-7M14 12l5-4M16 15l4-1M17 18h3" stroke="#e8791b" stroke-width="1.400"/></svg></button>
  </div>
  <button class="bt r1"><svg class="ico" viewBox="0 0 20 20"><path d="M4 4q6-4 7 0t7-1l-2 12q-6 5-7 1t-8 1z" fill="url(#gD)" stroke="#444" stroke-width="1.200"/><path d="M3 9q6-3 7 0t7 0M9 3L7 15M14 4l-2 13" stroke="#444" fill="none"/></svg>反射</button>
  <button class="bt r2"><svg class="ico" viewBox="0 0 20 20"><path d="M0 5l6 5-6 6z" fill="#12a31a"/><path d="M8 5l5-3 6 1v12l-5 4-6-2z" fill="url(#gY)" stroke="#c48a00"/></svg>仅显示</button>
  <select class="s3" aria-label="选择过滤器"><option>无选择过滤器</option></select>
  <button class="bt r3"><svg class="ico" viewBox="0 0 20 20"><path d="M1 5l7-4 6 4-6 4zM1 9l7 4M1 13l7 4M1 5v9l7 4V9" fill="url(#gG)" stroke="#555"/><path d="M7 8h12v11H7z" fill="#fff" stroke="#111" stroke-width="1.200"/><path d="M10 11v5h5M10 16l6-5" stroke="#111" fill="none"/></svg>移层</button>
  <button class="bt r4" aria-label="旋转"><svg class="ico" viewBox="0 0 20 20"><path d="M9 7V1h3q3 0 2 3H9M12 4l3 4M11 7v6" stroke="#6a5ad8" stroke-width="1.400" fill="none"/><path d="M4 15q2 4 7 3 6-3 5-9" stroke="#c81f3a" stroke-width="1.800" fill="none"/></svg></button>
  <button class="bt r5"><svg class="ico" viewBox="0 0 20 20"><use href="#crv"/><path d="M7 13l9-9 3 2-8 9 4-1 3 2v3H8z" fill="#fff" stroke="#222" stroke-width="1.200"/></svg>检查</button>
  <button class="bt r5"><svg class="ico" viewBox="0 0 20 20"><path d="M1 14L14 1l5 4L6 19zM5 10l3 2M8 7l3 2M11 4l3 2" fill="#fff" stroke="#444" stroke-width="1.200"/></svg>测量</button>
  <button class="bt r6" aria-label="角度"><svg class="ico" viewBox="0 0 20 20"><path d="M7 1l11 14" stroke="#999" stroke-width="1.800"/><path d="M3 5v14h15M3 19L5 5l8 13M3 12q6 0 7 7" stroke="#c01f35" stroke-width="1.500" fill="none"/></svg></button>
  <i class="bs"></i>
  <button class="car end" aria-label="选择条选项"></button>
</section>

<footer class="status">选择对象以执行操作，或者双击以执行默认操作</footer>
<div class="task"><i></i></div>
</div>

<div class="ime" role="toolbar" aria-label="输入法">
  <svg class="sg" viewBox="0 0 76 74"><path d="M4 14L64 1q4 0 5 4l7 56q0 4-4 5L22 74q-5 1-6-5L1 20q0-5 3-6z" fill="url(#gS)"/><path d="M59 20q-30-9-36 5-2 10 14 13 17 3 13 12-6 9-28 3" fill="none" stroke="#fff" stroke-width="9"/></svg>
  <i class="ib"></i>
  <button>中</button>
  <button aria-label="标点"><svg viewBox="0 0 40 40"><circle cx="9" cy="13" r="5" fill="none" stroke="#0b63c5" stroke-width="3"/><path d="M22 20h8v7q-1 6-7 8 3-4 2-7h-3z" fill="#0b63c5"/></svg></button>
  <button aria-label="表情"><svg viewBox="0 0 40 40"><circle cx="20" cy="20" r="18" fill="none" stroke="#0b63c5" stroke-width="3.500"/><path d="M13 12v6M27 12v6M11 24q9 11 18 0" fill="none" stroke="#0b63c5" stroke-width="3.500"/></svg></button>
  <button aria-label="手写"><svg viewBox="0 0 40 40"><path d="M4 34V25L24 4l11 9-18 20zM4 25l13 8M4 34h13" fill="none" stroke="#0b63c5" stroke-width="4"/></svg></button>
  <button aria-label="语音"><svg viewBox="0 0 40 40"><rect x="14" y="1" width="12" height="23" rx="6" fill="#0b63c5"/><path d="M8 16q0 14 12 14t12-14M20 30v8M14 38h12" fill="none" stroke="#0b63c5" stroke-width="3.500"/></svg></button>
  <button aria-label="工具箱"><svg viewBox="0 0 40 40"><path d="M4 5h14v14H4zM4 22h14v14H4zM21 22h15v14H21z" fill="#0b63c5"/><path d="M23 7h11v10H23z" fill="none" stroke="#0b63c5" stroke-width="3"/></svg></button>
</div>
<div class="mark">UG爱好者论坛 WWW.UGSNX.COM</div>
</body>
</html>
```
FILE: styles.css
```css
* { box-sizing: border-box; }
body {
  margin: 0;
  font: 28px/36px "Open Sans", "Noto Sans CJK SC", sans-serif;
  color: #1c1c1c;
  background: #efefef;
  overflow: hidden;
}
button {
  font: inherit;
  color: inherit;
  background: none;
  border: 0;
  padding: 0;
  margin: 0;
  white-space: nowrap;
}
svg { display: block; flex: none; }
i { font-style: normal; }
.defs { position: absolute; }
.ico { width: 40px; height: 40px; }
.app { min-height: 100vh; display: flex; flex-direction: column; }

.car {
  display: block;
  flex: none;
  width: 14px;
  height: 16px;
  background: #1c1c1c;
  clip-path: polygon(0 25%, 100% 25%, 50% 85%);
  place-self: center;
}
.car.lt { background: #fff; }
.car.blue { background: #2a86a8; }

/* title bar */
.titlebar, .menubar {
  background: linear-gradient(90deg, #6cbd29, #84d040 55%, #97df5b);
  color: #fff;
  display: flex;
}
.titlebar { height: 72px; border-top: 2px solid #5da62a; padding: 0 20px 0 8px; }
.menubar { height: 68px; justify-content: space-between; align-items: flex-start; padding: 0 18px 0 50px; }
.quick { display: flex; align-items: center; height: 62px; }
.logo { width: 83px; font: 700 54px/60px "Open Sans", sans-serif; }
.vs { width: 2px; height: 46px; background: #1d5a4c; margin-right: 19px; }
.w { fill: none; stroke: #fff; stroke-width: 1.200px; }
.tb { width: 40px; margin-right: 15px; }
.tb.dim { opacity: .35; }
.tb:has(+ .car), .tb.dim { margin-right: 19px; }
.quick > .car { margin-right: 18px; }
.tx { display: flex; align-items: center; gap: 10px; margin-right: 16px; }
.tx .ico { margin-right: -2px; }
.more { display: grid; justify-items: center; width: 20px; padding-left: 6px; }
.more i { width: 16px; height: 3px; background: #fff; }
.title {
  margin: 0 16px 0 auto;
  font: 600 36px/44px "Open Sans", "Noto Sans CJK SC", sans-serif;
  height: 44px;
  display: flex;
  align-items: center;
  gap: 23px;
}
.mode { display: flex; align-items: center; gap: 6px; height: 44px; line-height: 44px; }
.mode svg { width: 20px; height: 20px; }
.right { display: flex; align-items: flex-start; margin-left: 430px; }
.search {
  width: 442px;
  height: 50px;
  margin: 6px 26px 0 0;
  background: #fff;
  border: 3px solid #7c8577;
  display: flex;
  align-items: center;
  padding-right: 4px;
}
.search input {
  flex: 1;
  min-width: 0;
  border: 0;
  outline: 0;
  padding: 0;
  background: none;
  font: 27px/36px "Open Sans", "Noto Sans CJK SC", sans-serif;
}
.search input::placeholder { color: #757575; opacity: 1; }
.siemens { font: 800 35px/36px "Open Sans", sans-serif; margin: 16px 62px 0 4px; }
.win { width: 30px; height: 30px; margin: 18px 28px 0 0; }
.win:last-child { margin-right: 0; }
.file { font-size: 32px; line-height: 44px; margin-top: 12px; }
.help { width: 58px; height: 58px; }

/* ribbon */
.ribbon {
  height: 120px;
  display: flex;
  align-items: flex-start;
  border-bottom: 3px solid #a9a9a9;
  padding-top: 4px;
}
.grp { display: flex; align-items: center; height: 112px; border-image: linear-gradient(transparent 6%, #b8b8b8 6% 94%, transparent 94%) 1; border-style: solid; border-width: 0 2px 0 0; }
.grid { display: grid; grid-template-rows: 55px 55px; }
.ic { display: grid; place-items: center; }
.ic.on { background: #b0d8e2; margin: 0 3px; }
.big { display: flex; align-items: center; gap: 8px; }
.nx { padding: 0 20px 0 25px; gap: 12px; }
.ga { padding: 0 17px 0 30px; }
.ga .big { width: 120px; }
.g-a1 { grid-template-columns: 50px 50px 50px 46px; }
.c9 { grid-template-columns: repeat(9, 1fr); width: 560px; }
.gb { padding: 0 18px 0 20px; }
.g-b { grid-template-columns: 62px 62px 36px 64px 34px; }
.gc { padding: 0 14px 0 31px; }
.gc .big { width: 115px; }
.c11 { grid-template-columns: repeat(11, 1fr); width: 688px; }
.gd { padding: 0 6px 0 12px; }
.c3 { grid-template-columns: repeat(3, 1fr); width: 187px; }
.ge { padding: 0 26px 0 30px; }
.ge .mid { width: 52px; justify-items: start; }
.g-e1 { grid-template-columns: 62px 62px 63px 37px; }
.c5 { grid-template-columns: repeat(5, 1fr); width: 312px; }
.lbl { width: 38px; align-items: center; }
.lbl:last-child { width: 26px; }
.gf { padding: 0 14px 0 20px; }
.grid.c1 { grid-template-columns: 62px; }
.gg { padding: 0 13px 0 20px; }
.c6 { grid-template-columns: repeat(6, 1fr); width: 374px; }
.ribbon .end { margin: 82px 14px 0 auto; }
.ln .ico, .ico.ln { fill: none; stroke: #16a5c8; stroke-width: 1.400px; }
.ln .or { stroke: #e8791b; }
.ln .gy { stroke: #777; }
.ln .bk { stroke: #222; stroke-width: 1.400px; }

/* main */
.main { flex: 1; display: flex; min-height: 0; }
.rail { width: 75px; background: #dcdcdc; border-right: 2px solid #a9a9a9; display: flex; flex-direction: column; }
.rail button { height: 90px; display: grid; place-items: center; padding-left: 5px; }
.rail button:first-child { height: 77px; padding-left: 3px; }
.rail .sel { background: #efefef; border: 2px solid #a9a9a9; border-right: 0; margin: 0 -2px 0 8px; padding: 0 5px 0 0; }
.panel { width: 678px; border-right: 3px solid #a9a9a9; padding: 0 23px 15px 21px; display: flex; flex-direction: column; }
.phead { height: 67px; display: flex; align-items: center; padding-bottom: 5px; }
.phead .ico { margin-left: -8px; }
.phead h2 { margin: 0 auto 0 12px; font: 500 30px/36px "Noto Sans CJK SC", sans-serif; color: #000; }
.max { width: 30px; height: 27px; border: 3px solid #000; border-top-width: 5px; margin-right: 5px; }
.tree {
  flex: 1;
  border: 2px solid #b4b4b4;
  display: flex;
  flex-direction: column;
  justify-content: space-between;
  background:
    linear-gradient(#000, #000) 573px 0 / 2px 100% no-repeat,
    repeating-linear-gradient(#fafafa 0 48px, #e4e4e4 48px 50px, #f4f4f4 50px 98px, #e4e4e4 98px 100px) 0 48px;
}
.tree table { border-collapse: separate; border-spacing: 0; table-layout: fixed; width: 100%; font-size: 30px; }
.tree th { height: 48px; padding: 2px 0 0 14px; background: #efefef; border-bottom: 2px solid #c4c4c4; text-align: left; font-weight: 400; line-height: 44px; overflow: hidden; white-space: nowrap; }
.tree .c1 { width: 575px; border-right: 2px solid #c4c4c4; }
.tree td { height: 50px; padding: 0; }
.row { display: flex; align-items: center; height: 50px; padding-left: 22px; }
.row span { margin-left: 7px; }
.row label { display: flex; align-items: center; gap: 6px; }
.row b { font-size: 30px; font-weight: 700; }
.twig { width: 24px; height: 50px; fill: none; stroke: #999; stroke-width: 2px; stroke-dasharray: 2 2; }
.row input {
  appearance: none;
  width: 35px;
  height: 35px;
  margin: 0 4px 0 3px;
  border: 2px solid #444;
  background: #fff;
}
.row input:checked::before {
  content: "";
  display: block;
  height: 100%;
  background: #fb1734;
  clip-path: polygon(8% 50%, 24% 46%, 40% 70%, 82% 12%, 90% 22%, 42% 92%);
}
.hscroll { height: 42px; background: #efefef; display: flex; }
.hscroll button { width: 42px; display: grid; place-items: center; }
.hscroll button:last-child { margin-left: auto; }
.hscroll svg { width: 20px; height: 20px; fill: none; stroke: #555; stroke-width: 4px; }
.thumb { width: 292px; background: #cdcdcd; }
.split { height: 14px; margin: 6px 0; background: #dcdcdc; border: 2px solid #a9a9a9; }
.fold { height: 60px; border-bottom: 5px solid #d2d2d2; display: flex; align-items: center; gap: 23px; padding: 6px 0 0 25px; color: #0a6482; font-size: 35px; line-height: 44px; }
.fold i { width: 10px; height: 22px; background: #0a6482; clip-path: polygon(0 0, 100% 50%, 0 100%); }

.work { flex: 1; min-width: 0; display: flex; flex-direction: column; }
.tabs { height: 68px; border-bottom: 6px solid #97dc5c; display: flex; padding-left: 12px; }
.tab { display: flex; align-items: center; padding-left: 3px; width: 308px; font-size: 30px; }
.tab span { margin: 0 18px 0 10px; }
.doc { width: 28px; height: 28px; }
.cls { width: 22px; height: 22px; margin-left: 14px; }
.cur { width: 384px; padding-left: 14px; background: #97dc5c; color: #fff; }
.canvas {
  flex: 1;
  position: relative;
  min-height: 0;
  border: solid #b4b4b4;
  border-width: 3px 2px 3px 2px;
  background: linear-gradient(#b3b3b5, #c6c7c9 25%, #d9dadb 60%, #e6e8e9 82%);
}
.canvas svg { position: absolute; inset: 0; width: 100%; height: 100%; }
.axis { font: 28px "Liberation Serif", serif; }

/* selection bar */
.bottom { height: 73px; display: flex; align-items: center; padding: 0 15px 0 25px; border-bottom: 3px solid #a9a9a9; }
select {
  appearance: none;
  height: 52px;
  border: 3px solid #7d7d7d;
  border-radius: 0;
  padding: 0 0 0 4px;
  font: inherit;
  color: inherit;
  background:
    linear-gradient(to bottom left, #111 50%, transparent 50%) right 19px center / 9px 11px no-repeat,
    linear-gradient(to bottom right, #111 50%, transparent 50%) right 10px center / 9px 11px no-repeat,
    #fff;
}
.s1 { width: 120px; margin-right: 20px; }
.s2 { width: 387px; margin-right: 21px; }
.s3 { width: 369px; margin-right: 20px; }
.bt { display: flex; align-items: center; gap: 9px; }
.bt.e { margin-right: 26px; }
.bt.l { margin-right: 18px; }
.bs { width: 2px; height: 50px; background: #b8b8b8; }
.bt.k { margin: 0 20px 0 30px; }
.bt.m { gap: 11px; margin-right: 24px; }
.br { margin-right: 27px; }
.bottom .grid { grid-template-rows: 56px; }
.snap0 { grid-template-columns: 62px 62px 34px; margin: 0 5px 0 11px; }
.off { opacity: .45; }
.snap { grid-template-columns: repeat(14, 1fr); width: 875px; }
.snap .ico { fill: none; stroke: #a6a6a6; stroke-width: 1.300px; }
.snap .ico.plain { fill: initial; stroke: none; }
.hl { background: #e4f2f6; margin: 0 3px; }
.r1 { margin: 0 21px 0 11px; }
.r2 { margin-right: 25px; }
.r3 { margin-right: 26px; }
.r4 { margin-right: 19px; }
.r5 { margin-right: 24px; }
.r5 + .r6 { margin: 0 20px 0 -4px; }
.bottom .end { margin: 8px 0 0 auto; }

.status { height: 52px; padding: 5px 5px; font-weight: 500; line-height: 40px; }
.task { height: 10px; background: linear-gradient(90deg, #1e2d3f 70%, #222c5a 80%, #223646 88%, #20204e); }
.task i { display: block; height: 10px; width: 400px; margin-left: 1701px; background: #4c5862; }

/* floating input-method bar */
.ime {
  position: fixed;
  right: 887px;
  bottom: 11px;
  width: 482px;
  height: 74px;
  display: flex;
  align-items: center;
  background: #fafafa;
  border: 2px solid #b4c0cc;
  border-radius: 5px;
  padding-left: 12px;
}
.sg { width: 78px; height: 74px; }
.ib { width: 8px; height: 70px; margin: 0 5px 0 14px; border: solid #f8cdb8; border-width: 0 2px; }
.ime button { width: 60px; display: grid; place-items: center; color: #0b63c5; font: 700 38px/44px "Noto Sans CJK SC", sans-serif; }
.ime button svg { width: 42px; height: 42px; }
.mark {
  position: fixed;
  right: 8px;
  bottom: 4px;
  font: 14px/16px "Liberation Serif", "Noto Sans CJK SC", serif;
  color: #ddd;
  text-shadow: 1px 1px 0 #333, -1px 0 0 #888;
}
```
